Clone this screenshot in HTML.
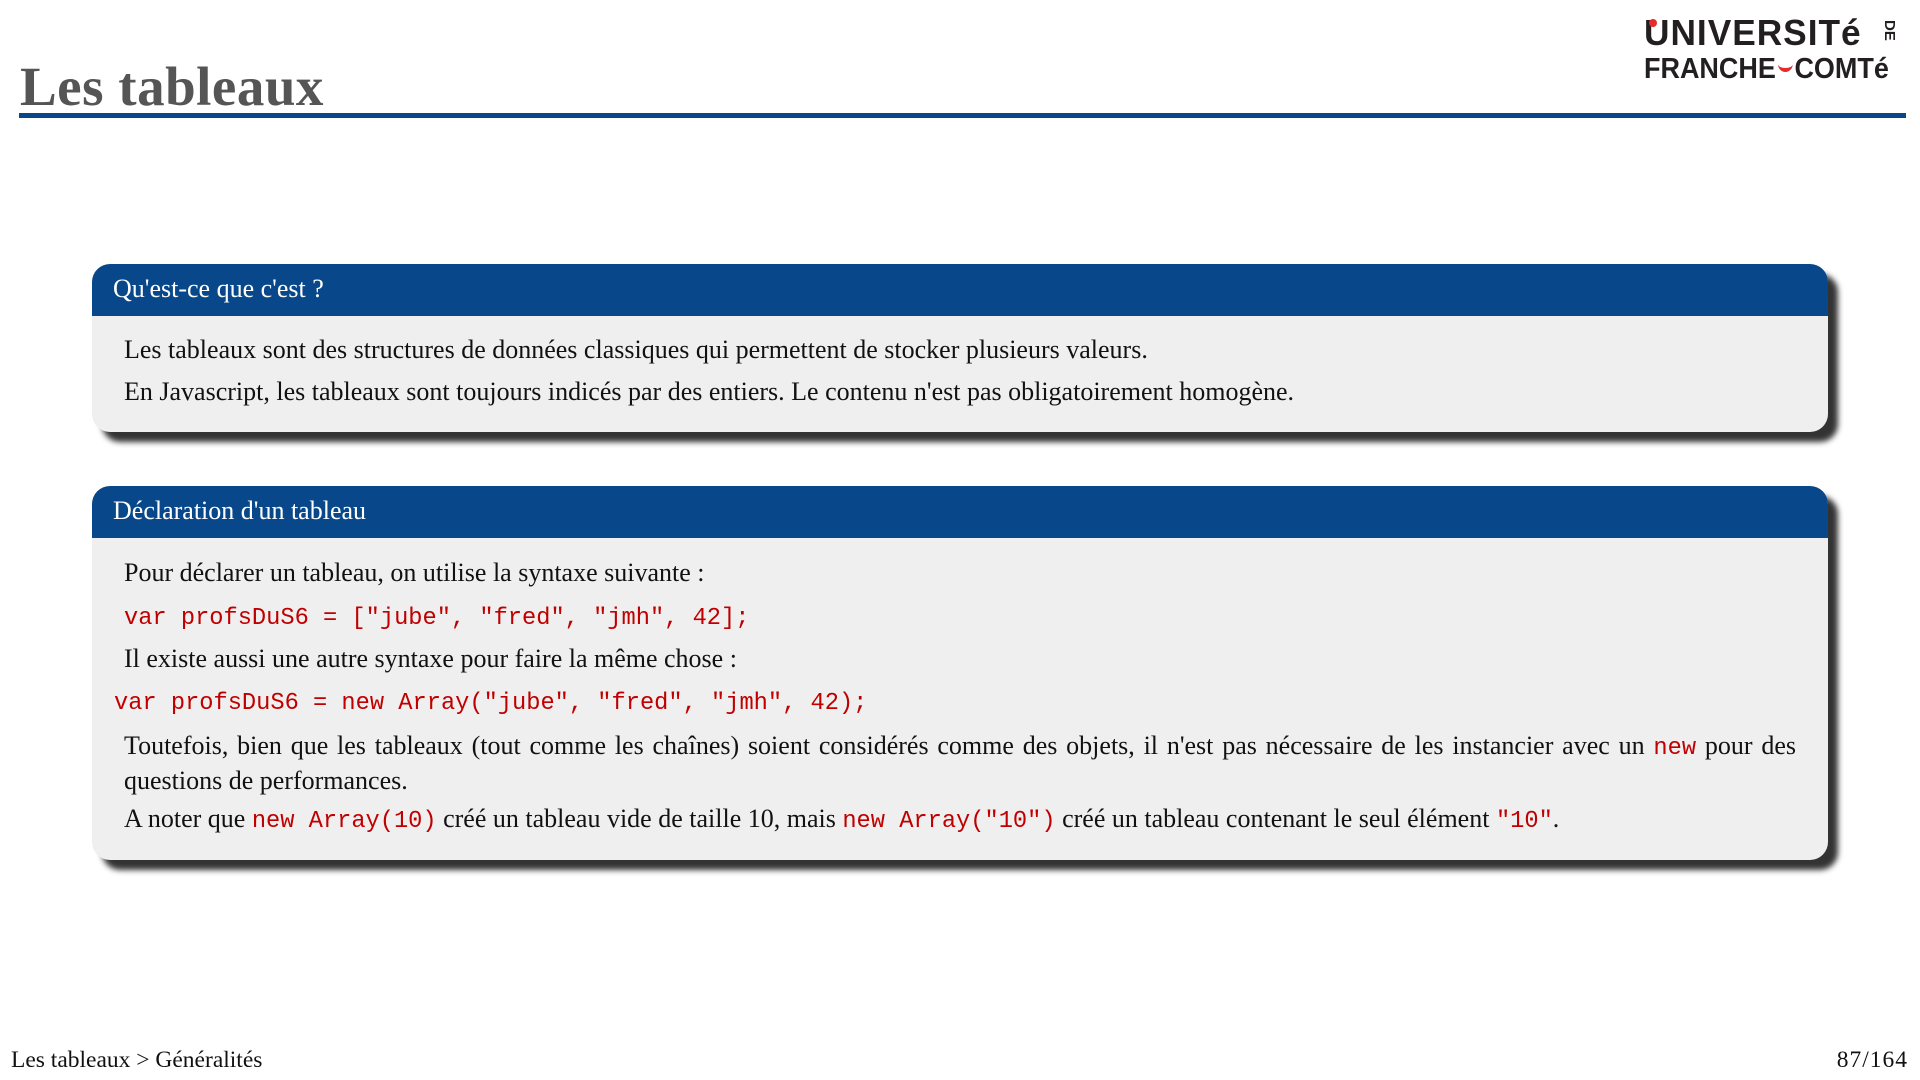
<!DOCTYPE html>
<html><head><meta charset="utf-8"><style>
*{margin:0;padding:0;box-sizing:border-box}
body{width:1920px;height:1080px;background:#fff;position:relative;overflow:hidden;font-family:"Liberation Serif",serif;color:#111}
.title{position:absolute;left:20px;top:59px;font-size:55px;font-weight:bold;color:#555;line-height:1;letter-spacing:.5px}
.rule{position:absolute;left:19px;top:113px;width:1887px;height:5px;background:#08488a}
.logo{position:absolute;font-family:"Liberation Sans",sans-serif;font-weight:bold;color:#231f20;transform-origin:0 0;white-space:nowrap;line-height:1}
.box{position:absolute;left:92px;width:1736px;background:#efefef;border-radius:18px;box-shadow:10px 10px 6px rgba(0,0,0,.8);overflow:hidden}
.hd{background:#08488a;color:#fff;height:52px;font-size:26px;padding-left:21px;line-height:50px}
.l{position:absolute;left:32px;white-space:nowrap;font-size:26px;line-height:30px}
.c{font-family:"Liberation Mono",monospace;color:#c00000;font-size:23.7px}
.foot{position:absolute;font-size:23.5px;top:1047px}
</style></head><body>
<div class="title">Les tableaux</div>
<div class="rule"></div>
<div class="logo" style="left:1644px;top:15px;font-size:36px;transform:scaleX(.98);letter-spacing:1px">UNIVERSITé</div>
<div class="logo" style="top:20px;font-size:15px;transform:rotate(90deg);left:1897px">DE</div>
<div class="logo" style="left:1644px;top:55px;font-size:29px;transform:scaleX(.93)">FRANCHE<span style="display:inline-block;width:16px;height:8px;border-bottom:4px solid #e52b2b;border-radius:0 0 10px 10px;margin:0 2px;vertical-align:6px"></span>COMTé</div>
<div style="position:absolute;left:1649px;top:19px;width:8px;height:8px;border-radius:50%;background:#e52b2b"></div>

<div class="box" style="top:264px;height:168px">
<div class="hd">Qu'est-ce que c'est ?</div>
<div class="l" style="top:71px">Les tableaux sont des structures de données classiques qui permettent de stocker plusieurs valeurs.</div>
<div class="l" style="top:113px">En Javascript, les tableaux sont toujours indicés par des entiers. Le contenu n'est pas obligatoirement homogène.</div>
</div>

<div class="box" style="top:486px;height:374px">
<div class="hd">Déclaration d'un tableau</div>
<div class="l" style="top:72px">Pour déclarer un tableau, on utilise la syntaxe suivante :</div>
<div class="l c" style="top:118px">var profsDuS6 = ["jube", "fred", "jmh", 42];</div>
<div class="l" style="top:158px">Il existe aussi une autre syntaxe pour faire la même chose :</div>
<div class="l c" style="top:203px;left:22px">var profsDuS6 = new Array("jube", "fred", "jmh", 42);</div>
<div style="position:absolute;left:32px;top:244px;width:1672px;font-size:26px;line-height:32px;text-align:justify;text-align-last:left">Toutefois, bien que les tableaux (tout comme les chaînes) soient considérés comme des objets, il n'est pas nécessaire de les instancier avec un <span class="c">new</span> pour des questions de performances.</div>
<div class="l" style="top:318px">A noter que <span class="c">new Array(10)</span> créé un tableau vide de taille 10, mais <span class="c">new Array("10")</span> créé un tableau contenant le seul élément <span class="c">"10"</span>.</div>
</div>

<div class="foot" style="left:11px">Les tableaux &gt; Généralités</div>
<div class="foot" style="right:12px;letter-spacing:1px">87/164</div>
</body></html>
